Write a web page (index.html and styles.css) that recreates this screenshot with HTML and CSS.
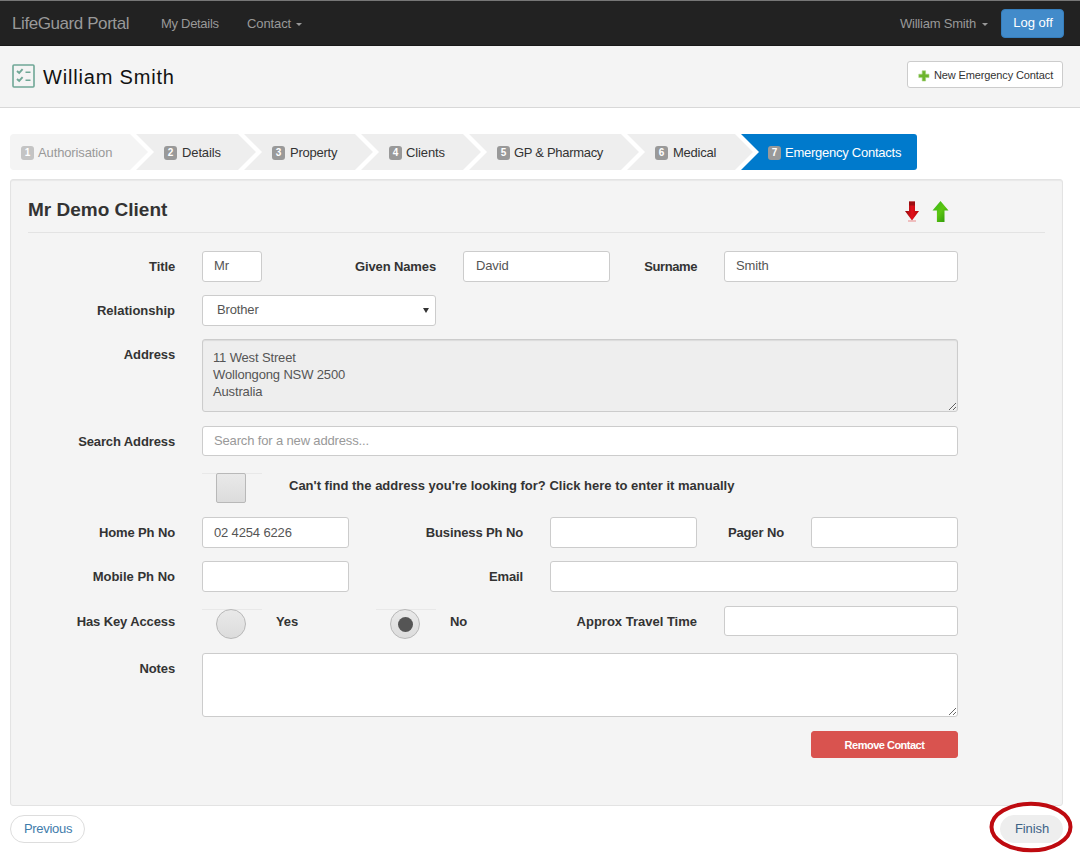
FILE: index.html
```html
<!DOCTYPE html>
<html lang="en">
<head>
<meta charset="utf-8">
<title>LifeGuard Portal</title>
<link rel="stylesheet" href="styles.css">
</head>
<body>
<nav class="navbar">
  <a class="brand"><span>LifeGuard Portal</span></a>
  <a class="nav-link nav-details"><span>My Details</span></a>
  <a class="nav-link nav-contact"><span>Contact</span><i class="caret"></i></a>
  <a class="nav-link nav-user"><span>William Smith</span><i class="caret"></i></a>
  <button class="btn-logoff"><span>Log off</span></button>
</nav>
<header class="page-head">
  <svg class="list-icon" width="23" height="24" viewBox="0 0 23 24" fill="none" stroke="#6fa796">
    <rect x="1" y="1" width="21" height="22" rx="1" stroke-width="1.6"/>
    <path d="M5 7l2.200 2 3.400-3.800M5 15l2.200 2 3.400-3.800" stroke-width="1.900"/>
    <path d="M13.500 8.300h5M13.500 16.300h5" stroke-width="1.500"/>
  </svg>
  <h1><span>William Smith</span></h1>
  <button class="btn-new">
    <svg width="12" height="12" viewBox="0 0 12 12"><path d="M4.200 .8h3.400v3.400H11v3.400H7.600V11H4.200V7.600H.8V4.200h3.400z" fill="#6db52c" stroke="#a5cf7c" stroke-width=".6"/></svg>
    <span>New Emergency Contact</span>
  </button>
</header>
<main class="content">
  <ol class="steps">
    <li class="step s1"><b>1</b><span>Authorisation</span></li>
    <li class="step s2"><b>2</b><span>Details</span></li>
    <li class="step s3"><b>3</b><span>Property</span></li>
    <li class="step s4"><b>4</b><span>Clients</span></li>
    <li class="step s5"><b>5</b><span>GP &amp; Pharmacy</span></li>
    <li class="step s6"><b>6</b><span>Medical</span></li>
    <li class="step s7"><b>7</b><span>Emergency Contacts</span></li>
  </ol>
  <section class="panel">
    <div class="panel-title">
      <h2><span>Mr Demo Client</span></h2>
      <div class="arrows">
        <svg width="16" height="22" viewBox="0 0 16 22"><defs><linearGradient id="r"><stop offset="0" stop-color="#8f0b0b"/><stop offset=".5" stop-color="#e3101c"/><stop offset="1" stop-color="#b00808"/></linearGradient></defs><path d="M5 1.500h6v9.500h4L8 20.500 1 11H5z" fill="url(#r)"/><path d="M5 1.500h6v4H5z" fill="#7c1010" opacity=".65"/><path d="M4 21h8" stroke="#e98a8a" stroke-width="1"/></svg>
        <svg width="18" height="22" viewBox="0 0 18 22"><defs><linearGradient id="g" x1="0" x2="1" y1="0" y2="1"><stop offset="0" stop-color="#35b51b"/><stop offset=".5" stop-color="#5cc611"/><stop offset="1" stop-color="#259008"/></linearGradient></defs><path d="M9.500 1l8 9.500H13.500V22H5.900V10.500H1.500z" fill="url(#g)"/></svg>
      </div>
    </div>
    <form class="form">
      <div class="row">
        <label class="c1 w2">Title</label><input class="c3 w1" value="Mr">
        <label class="c4 w2">Given Names</label><input class="c6 w2 in" value="David">
        <label class="c8 w1 surname">Surname</label><input class="c9 w3" value="Smith">
      </div>
      <div class="row">
        <label class="c1 w2 wide">Relationship</label>
        <div class="select c3 w3"><span>Brother</span><i></i></div>
      </div>
      <div class="row r-address">
        <label class="c1 w2">Address</label>
        <textarea class="c3 w9 readonly" readonly>11 West Street
Wollongong NSW 2500
Australia</textarea>
      </div>
      <div class="row r-search">
        <label class="c1 w2">Search Address</label>
        <input class="c3 w9" placeholder="Search for a new address...">
      </div>
      <div class="row r-manual">
        <div class="tick c3 w1"><i class="check"></i></div>
        <label class="c4 w6 left wide"><span class="manual">Can't find the address you're looking for? Click here to enter it manually</span></label>
      </div>
      <div class="row">
        <label class="c1 w2">Home Ph No</label><input class="c3 w2 phone" value="02 4254 6226">
        <label class="c5 w2">Business Ph No</label><input class="c7 w2">
        <label class="c9 w1">Pager No</label><input class="c10 w2">
      </div>
      <div class="row r-mobile">
        <label class="c1 w2 wide">Mobile Ph No</label><input class="c3 w2">
        <label class="c6 w1">Email</label><input class="c7 w5">
      </div>
      <div class="row r-key">
        <label class="c1 w2">Has Key Access</label>
        <div class="tick c3 w1"><i class="radio"></i></div><label class="c4 w1 left yes">Yes</label>
        <div class="tick c5 w1"><i class="radio on"></i></div><label class="c6 w1 left yes">No</label>
        <label class="c7 w2 wide">Approx Travel Time</label><input class="c9 w3">
      </div>
      <div class="row r-notes">
        <label class="c1 w2">Notes</label><textarea class="c3 w9"></textarea>
      </div>
      <div class="row r-remove">
        <button type="button" class="btn-remove c10 w2"><span>Remove Contact</span></button>
      </div>
    </form>
  </section>
  <footer class="pager">
    <a class="pill"><span>Previous</span></a>
    <a class="pill finish"><span>Finish</span>
      <svg class="ring" width="84" height="52" viewBox="0 0 84 52"><ellipse cx="42" cy="26" rx="39.500" ry="23.300" fill="none" stroke="#be0a10" stroke-width="4"/></svg>
    </a>
  </footer>
</main>
</body>
</html>
```
FILE: styles.css
```css
* { box-sizing: border-box; }
body {
  margin: 0;
  height: 855px;
  overflow: hidden;
  background: #fff;
  color: #333;
  font: 13px/17px "Liberation Sans", Arial, sans-serif;
}
h1, h2, ol { margin: 0; padding: 0; list-style: none; }
button, input, textarea { font: inherit; color: inherit; margin: 0; }

.navbar {
  height: 46px;
  display: flex;
  align-items: center;
  padding: 0 16px 0 12px;
  background: #222;
  border-top: 1px solid #777;
  border-bottom: 1px solid #181818;
  color: #999;
}
.brand { width: 149px; font-size: 17px; letter-spacing: -.42px; }
.nav-link { display: flex; align-items: center; letter-spacing: -.2px; }
.nav-details { width: 86px; letter-spacing: -.3px; }
.nav-contact { letter-spacing: -.1px; }
.caret {
  margin: 2px 0 0 5px;
  border: 3px solid transparent;
  border-top-color: #999;
  border-bottom: 0;
}
.nav-user { margin-left: auto; }
.nav-user .caret { margin-left: 6px; }
.btn-logoff {
  width: 63px;
  height: 29px;
  margin: 0 0 0 13px;
  padding: 0 0 2px 1px;
  border: 1px solid #357ebd;
  border-radius: 4px;
  background: #428bca;
  color: #fff;
}

.page-head {
  height: 62px;
  display: flex;
  align-items: center;
  padding: 0 17px 0 12px;
  background: #f4f4f4;
  border-bottom: 1px solid #d8d8d8;
}
.list-icon { margin-bottom: 2px; }
.page-head h1 {
  margin: 2px 0 0 8px;
  color: #111;
  font-size: 20px;
  font-weight: 400;
  letter-spacing: .82px;
}
.btn-new {
  width: 156px;
  height: 27px;
  margin: 0 0 4px auto;
  padding: 2px 0 0 1px;
  display: flex;
  align-items: center;
  justify-content: center;
  gap: 4px;
  border: 1px solid #ccc;
  border-radius: 3px;
  background: #fff;
  font-size: 11px;
  letter-spacing: -.12px;
}

.content { padding: 26px 17px 0 10px; }
.steps { display: flex; height: 36px; }
.step {
  position: relative;
  display: flex;
  align-items: center;
  gap: 5px;
  padding-left: 28px;
  width: 108px;
  white-space: nowrap;
  letter-spacing: -.12px;
}
.step::before {
  content: "";
  position: absolute;
  z-index: -1;
  inset: 0 -12px 0 0;
  background: #eee;
  clip-path: polygon(0 0, calc(100% - 18px) 0, 100% 50%, calc(100% - 18px) 100%, 0 100%, 18px 50%);
}
.step b {
  width: 13px;
  height: 14px;
  margin-top: 1px;
  border-radius: 3px;
  background: #999;
  color: #fff;
  font-size: 10px;
  line-height: 14px;
  text-align: center;
}
.s1 { width: 126px; padding-left: 11px; gap: 4px; color: #999; }
.s1 b { background: #c4c4c4; }
.s1::before {
  border-radius: 4px;
  background: #f4f4f4;
  clip-path: polygon(0 0, calc(100% - 18px) 0, 100% 50%, calc(100% - 18px) 100%, 0 100%);
}
.s3 { width: 117px; letter-spacing: -.25px; }
.s4, .s5 { gap: 4px; }
.s5 { width: 158px; letter-spacing: -.3px; }
.s6 { width: 114px; letter-spacing: -.25px; }
.s7 { width: 176px; padding-left: 27px; gap: 4px; color: #fff; letter-spacing: -.25px; }
.s7::before {
  right: 0;
  border-radius: 0 3px 3px 0;
  background: #007acc;
  clip-path: polygon(0 0, 100% 0, 100% 100%, 0 100%, 18px 50%);
}

.panel {
  height: 627px;
  margin-top: 9px;
  padding: 0 17px;
  background: #f4f4f4;
  border: 1px solid #e3e3e3;
  border-radius: 3px;
  box-shadow: inset 0 1px 1px rgba(0, 0, 0, .05);
}
.panel-title {
  height: 53px;
  display: flex;
  align-items: center;
  border-bottom: 1px solid #e3e3e3;
}
.panel-title h2 { width: 876px; margin-top: 6px; font-size: 19px; }
.arrows { display: flex; gap: 11px; margin-top: 10px; }

.form { padding-top: 18px; }
.row {
  display: grid;
  grid-template-columns: repeat(12, 60px);
  grid-template-rows: 31px;
  column-gap: 27px;
  margin-bottom: 13px;
}
.row > * { grid-row: 1; }
.c1 { grid-column-start: 1; } .c3 { grid-column-start: 3; }
.c4 { grid-column-start: 4; } .c5 { grid-column-start: 5; }
.c6 { grid-column-start: 6; } .c7 { grid-column-start: 7; }
.c8 { grid-column-start: 8; } .c9 { grid-column-start: 9; }
.c10 { grid-column-start: 10; }
.w2 { grid-column-end: span 2; } .w3 { grid-column-end: span 3; }
.w5 { grid-column-end: span 5; } .w6 { grid-column-end: span 6; }
.w9 { grid-column-end: span 9; }
label {
  padding-top: 7px;
  font-weight: 700;
  text-align: right;
  white-space: nowrap;
  letter-spacing: -.12px;
}
label.wide { letter-spacing: 0; }
label.surname { letter-spacing: -.4px; }
label.left { text-align: left; }
input, textarea, .select {
  width: 100%;
  height: 100%;
  padding: 0 11px 2px;
  border: 1px solid #ccc;
  border-radius: 3px;
  background: #fff;
  color: #555;
  outline: 0;
  letter-spacing: -.15px;
}
input.in { padding-left: 12px; }
input.phone { padding-bottom: 0; }
textarea { display: block; padding: 9px 10px; }
textarea.readonly { background: #eee; box-shadow: inset 0 1px 1px rgba(0, 0, 0, .08); }
::placeholder { color: #999; opacity: 1; }
.select {
  display: flex;
  align-items: center;
  justify-content: space-between;
  padding: 0 6px 2px 14px;
}
.select i { margin-top: 1px; border: 3px solid transparent; border-top: 5px solid #333; border-bottom: 0; }
.r-address { grid-template-rows: 73px; margin-bottom: 14px; }
.r-search { grid-template-rows: 30px; margin-bottom: 17px; }
.r-manual { grid-template-rows: 30px; margin-bottom: 14px; }
.r-manual label { padding-top: 4px; }
.r-mobile { margin-bottom: 14px; }
.r-key { grid-template-rows: 30px; margin-bottom: 17px; }
.r-notes { grid-template-rows: 64px; margin-bottom: 14px; }
.r-remove { grid-template-rows: 27px; margin: 0; }
.yes { margin-left: -13px; }

.tick { padding-left: 14px; border-top: 1px solid #e8e8e8; }
.r-key .tick { margin-top: 3px; }
.check, .radio {
  display: flex;
  align-items: center;
  justify-content: center;
  width: 30px;
  height: 30px;
  margin-top: -1px;
  border: 1px solid #b8b8b8;
  border-radius: 2px;
  background: linear-gradient(#e9e9e9, #dcdcdc);
}
.radio { border-radius: 50%; }
.radio.on::after {
  content: "";
  width: 15px;
  height: 15px;
  border-radius: 50%;
  background: #555;
}
.btn-remove {
  padding: 1px 0 0;
  border: 1px solid #d9534f;
  border-radius: 3px;
  background: #d9534f;
  color: #fff;
  font-size: 11px;
  font-weight: 700;
  letter-spacing: -.5px;
}

.pager { display: flex; justify-content: space-between; padding-top: 9px; }
.pill {
  position: relative;
  width: 75px;
  height: 28px;
  display: flex;
  align-items: center;
  justify-content: center;
  padding: 0 0 2px 1px;
  border: 1px solid #ddd;
  border-radius: 14px;
  color: #3f7cab;
  letter-spacing: -.3px;
}
.finish { width: 63px; border-color: #eee; background: #eee; color: #3d6286; letter-spacing: -.1px; }
.ring { position: absolute; left: -12px; top: -15px; }
```
